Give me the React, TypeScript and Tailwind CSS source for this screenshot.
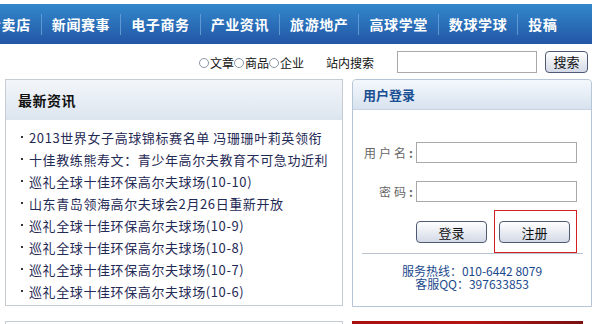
import React from "react";

const navItems = ["专卖店", "新闻赛事", "电子商务", "产业资讯", "旅游地产", "高球学堂", "数球学球", "投稿"];

const news = [
  "2013世界女子高球锦标赛名单 冯珊珊叶莉英领衔",
  "十佳教练熊寿文：青少年高尔夫教育不可急功近利",
  "巡礼全球十佳环保高尔夫球场(10-10)",
  "山东青岛领海高尔夫球会2月26日重新开放",
  "巡礼全球十佳环保高尔夫球场(10-9)",
  "巡礼全球十佳环保高尔夫球场(10-8)",
  "巡礼全球十佳环保高尔夫球场(10-7)",
  "巡礼全球十佳环保高尔夫球场(10-6)",
];

function Radio({ label }: { label: string }) {
  return (
    <span className="flex items-center">
      <span className="w-[10px] h-[10px] rounded-full border border-[#8a96a6] bg-white mr-[1px]" />
      <span>{label}</span>
    </span>
  );
}

export default function App() {
  return (
    <div
      className="w-[600px] h-[324px] overflow-hidden bg-white flex flex-col"
      style={{ fontFamily: '"Noto Sans CJK SC", "Liberation Sans", sans-serif' }}
    >
      {/* nav */}
      <div className="shrink-0 mt-[4px] h-[40px] w-[592px] bg-gradient-to-b from-[#3388cb] to-[#2356a6] flex items-center overflow-hidden">
        <div className="flex items-center ml-[-23px]">
          {navItems.map((t, i) => (
            <React.Fragment key={t}>
              {i > 0 && <span className="w-[1px] h-[21px] bg-[#5d98d2]" />}
              <span className="px-[10px] text-white font-bold text-[14px] tracking-[0.6px] leading-none whitespace-nowrap">
                {t}
              </span>
            </React.Fragment>
          ))}
        </div>
      </div>

      {/* search row */}
      <div className="shrink-0 h-[35px] flex items-center pl-[199px] text-[12px] text-[#111] leading-none">
        <div className="flex items-center mt-[3px]">
          <Radio label="文章" />
          <Radio label="商品" />
          <Radio label="企业" />
          <span className="ml-[22px]">站内搜索</span>
        </div>
        <div className="ml-[23px] w-[140px] h-[22px] border border-[#a9a9a9] bg-white" />
        <div className="ml-[8px] w-[43px] h-[22px] rounded-[4px] border border-[#4d5a72] bg-gradient-to-b from-[#ffffff] to-[#d3d9e6] flex items-center justify-center text-[13px] text-[#111]">
          搜索
        </div>
      </div>

      {/* panels */}
      <div className="shrink-0 flex pl-[5px] gap-[9px] items-start">
        <div className="w-[338px] h-[227px] border border-[#c6ccd3] flex flex-col">
          <div className="h-[40px] bg-gradient-to-b from-[#f3f6fa] to-[#dce5ef] flex items-center pl-[12px]">
            <span className="text-[14px] font-bold text-[#111] tracking-[0.5px]">最新资讯</span>
          </div>
          <ul className="pt-[6px] pl-[15px] text-[13px] tracking-[0.6px] text-[#1f2a55]">
            {news.map((n, i) => (
              <li key={i} className="h-[22px] flex items-center whitespace-nowrap leading-none">
                <span className="w-[2px] h-[2px] bg-[#333] mr-[6px]" />
                <span>{n}</span>
              </li>
            ))}
          </ul>
        </div>

        <div className="w-[240px] h-[228px] border border-[#b7c6d6] rounded-t-[4px] flex flex-col">
          <div className="h-[30px] bg-gradient-to-b from-[#f4f8fc] to-[#d8e3ef] border-b border-[#c6d4e2] rounded-t-[4px] flex items-center pl-[10px]">
            <span className="text-[13px] font-bold text-[#1b4f93]">用户登录</span>
          </div>
          <div className="flex flex-col pt-[32px]">
            <div className="flex items-center">
              <span className="w-[60px] flex justify-end items-center text-[12px] text-[#666] leading-none">
                <span className="tracking-[3px]">用户名</span>
                <span className="font-bold">:</span>
              </span>
              <div className="ml-[3px] w-[161px] h-[21px] border border-[#a9a9a9] bg-white" />
            </div>
            <div className="flex items-center mt-[18px]">
              <span className="w-[60px] flex justify-end items-center text-[12px] text-[#666] leading-none">
                <span className="tracking-[3px]">密码</span>
                <span className="font-bold">:</span>
              </span>
              <div className="ml-[3px] w-[161px] h-[21px] border border-[#a9a9a9] bg-white" />
            </div>
            <div className="flex mt-[19px] pl-[63px]">
              <div className="w-[71px] h-[22px] rounded-[4px] border border-[#4d5a72] bg-gradient-to-b from-[#ffffff] to-[#d3d9e6] flex items-center justify-center text-[13px] text-[#111] leading-none">
                登录
              </div>
              <div className="relative ml-[12px] w-[71px] h-[22px] rounded-[4px] border border-[#4d5a72] bg-gradient-to-b from-[#ffffff] to-[#d3d9e6] flex items-center justify-center text-[13px] text-[#111] leading-none">
                注册
                <div className="absolute left-[-5px] top-[-11px] w-[81px] h-[41px] outline outline-1 outline-[#d42020]" />
              </div>
            </div>
            <div className="mt-[10px] ml-[9px] mr-[8px] h-[1px] bg-[#b9c4d0]" />
            <div className="mt-[10px] flex flex-col items-center text-[12px] leading-[13px] text-[#1b4a8c]">
              <span>服务热线：010-6442 8079</span>
              <span>客服QQ：397633853</span>
            </div>
          </div>
        </div>
      </div>

      {/* bottom row */}
      <div className="shrink-0 flex pl-[5px] gap-[9px] mt-[14px]">
        <div className="w-[338px] h-[10px] border-t border-l border-r border-[#c6ccd3]" />
        <div className="w-[231px] h-[10px] bg-gradient-to-r from-[#a81010] via-[#b51414] to-[#7a1010]" />
      </div>
    </div>
  );
}
